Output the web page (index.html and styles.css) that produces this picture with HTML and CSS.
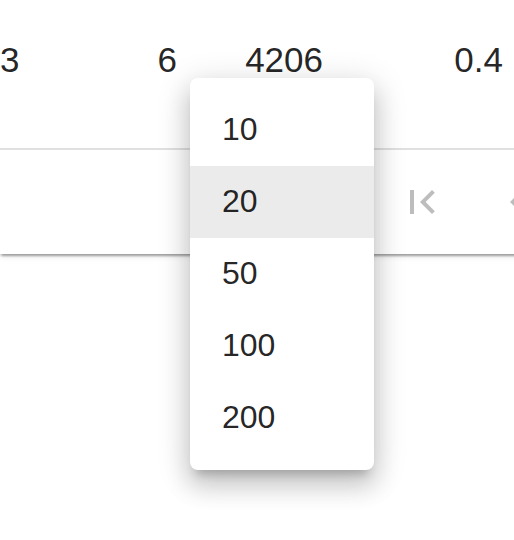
FILE: index.html
```html
<!DOCTYPE html>
<html lang="en">
<head>
<meta charset="utf-8">
<title>Table pagination</title>
<link rel="stylesheet" href="styles.css">
</head>
<body>
<div class="viewport">
  <div class="paper">
    <div class="row">
      <div class="cell c1">3</div>
      <div class="cell c2">6</div>
      <div class="cell c3">4206</div>
      <div class="cell c4">0.4</div>
    </div>
    <div class="toolbar">
      <div class="select-area"></div>
      <div class="actions">
        <button class="icon-btn" disabled aria-label="First page">
          <svg viewBox="0 0 24 24" class="icon"><path d="M18.41 16.59L13.82 12l4.59-4.59L17 6l-6 6 6 6zM6 6h2v12H6z"/></svg>
        </button>
        <button class="icon-btn" disabled aria-label="Previous page">
          <svg viewBox="0 0 24 24" class="icon"><path d="M15.41 16.59L10.83 12l4.58-4.59L14 6l-6 6 6 6 1.41-1.41z"/></svg>
        </button>
      </div>
    </div>
  </div>
  <ul class="menu">
    <li class="menu-item">10</li>
    <li class="menu-item selected">20</li>
    <li class="menu-item">50</li>
    <li class="menu-item">100</li>
    <li class="menu-item">200</li>
  </ul>
</div>
</body>
</html>
```

FILE: styles.css
```css
html, body {
  margin: 0;
  padding: 0;
  background: #ffffff;
}

body {
  font-family: "Liberation Sans", Arial, Helvetica, sans-serif;
  color: rgba(0, 0, 0, 0.87);
  overflow: hidden;
}

.viewport {
  position: relative;
  width: 514px;
  height: 540px;
  overflow: hidden;
}

.paper {
  width: 760px;
  background: #fff;
  box-shadow: 0 4px 2px -2px rgba(0, 0, 0, 0.2),
              0 2px 2px 0 rgba(0, 0, 0, 0.14),
              0 2px 6px 0 rgba(0, 0, 0, 0.12);
}

.row {
  display: flex;
  border-bottom: 2px solid #e0e0e0;
}

.cell {
  box-sizing: border-box;
  padding: 40px 32px 68px 0;
  font-size: 35px;
  line-height: 40px;
  text-align: right;
  flex: none;
}

.c1 { width: 49px; }
.c2 { width: 160px; }
.c3 { width: 146px; }
.c4 { width: 180px; }

.toolbar {
  display: flex;
  align-items: center;
  height: 104px;
}

.select-area {
  flex: none;
  width: 374px;
}

.actions {
  display: flex;
}

.icon-btn {
  flex: none;
  border: 0;
  background: transparent;
  padding: 24px;
  margin: 0;
  display: flex;
}

.icon {
  width: 48px;
  height: 48px;
  fill: rgba(0, 0, 0, 0.26);
}

.menu {
  position: absolute;
  left: 190px;
  top: 78px;
  width: 184px;
  margin: 0;
  padding: 16px 0;
  list-style: none;
  background: #fff;
  border-radius: 8px;
  box-shadow: 0 10px 10px -6px rgba(0, 0, 0, 0.2),
              0 16px 24px 2px rgba(0, 0, 0, 0.14),
              0 6px 32px 4px rgba(0, 0, 0, 0.12);
}

.menu-item {
  height: 72px;
  padding: 0 32px;
  font-size: 32px;
  line-height: 70px;
  color: rgba(0, 0, 0, 0.87);
}

.menu-item.selected {
  background: #ebebeb;
}
```
